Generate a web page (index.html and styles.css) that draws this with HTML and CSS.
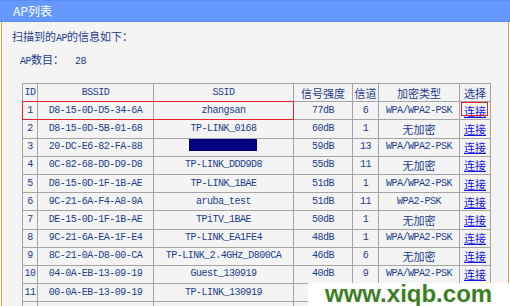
FILE: index.html
```html
<!DOCTYPE html>
<html lang="zh-CN">
<head>
<meta charset="utf-8">
<title>AP列表</title>
<link rel="stylesheet" href="styles.css">
</head>
<body>
<div class="titlebar">AP列表</div>
<div class="panel">
  <p class="info">扫描到的<span class="m">AP</span>的信息如下：</p>
  <p class="count"><span class="m">AP</span>数目：<span class="m num">28</span></p>
  <div class="tablewrap">
    <table class="aplist">
      <colgroup>
        <col class="c-id"><col class="c-bssid"><col class="c-ssid"><col class="c-sig"><col class="c-ch"><col class="c-enc"><col class="c-sel">
      </colgroup>
      <thead>
        <tr><th>ID</th><th>BSSID</th><th>SSID</th><th class="cn">信号强度</th><th class="cn">信道</th><th class="cn">加密类型</th><th class="cn">选择</th></tr>
      </thead>
      <tbody>
        <tr><td>1</td><td>D8-15-0D-D5-34-6A</td><td>zhangsan</td><td>77dB</td><td>6</td><td>WPA/WPA2-PSK</td><td class="cn"><a href="#">连接</a></td></tr>
        <tr><td>2</td><td>D8-15-0D-5B-01-68</td><td>TP-LINK_0168</td><td>60dB</td><td>1</td><td class="cn">无加密</td><td class="cn"><a href="#">连接</a></td></tr>
        <tr><td>3</td><td>20-DC-E6-82-FA-88</td><td><span class="redact"></span></td><td>59dB</td><td>13</td><td>WPA/WPA2-PSK</td><td class="cn"><a href="#">连接</a></td></tr>
        <tr><td>4</td><td>0C-82-68-DD-D9-D8</td><td>TP-LINK_DDD9D8</td><td>55dB</td><td>11</td><td class="cn">无加密</td><td class="cn"><a href="#">连接</a></td></tr>
        <tr><td>5</td><td>D8-15-0D-1F-1B-AE</td><td>TP-LINK_1BAE</td><td>51dB</td><td>1</td><td>WPA/WPA2-PSK</td><td class="cn"><a href="#">连接</a></td></tr>
        <tr><td>6</td><td>9C-21-6A-F4-A8-9A</td><td>aruba_test</td><td>51dB</td><td>11</td><td>WPA2-PSK</td><td class="cn"><a href="#">连接</a></td></tr>
        <tr><td>7</td><td>DE-15-0D-1F-1B-AE</td><td>TPiTV_1BAE</td><td>50dB</td><td>1</td><td class="cn">无加密</td><td class="cn"><a href="#">连接</a></td></tr>
        <tr><td>8</td><td>9C-21-6A-EA-1F-E4</td><td>TP-LINK_EA1FE4</td><td>48dB</td><td>1</td><td>WPA/WPA2-PSK</td><td class="cn"><a href="#">连接</a></td></tr>
        <tr><td>9</td><td>8C-21-0A-D8-00-CA</td><td>TP-LINK_2.4GHz_D800CA</td><td>46dB</td><td>6</td><td class="cn">无加密</td><td class="cn"><a href="#">连接</a></td></tr>
        <tr><td>10</td><td>04-0A-EB-13-09-19</td><td>Guest_130919</td><td>40dB</td><td>9</td><td>WPA/WPA2-PSK</td><td class="cn"><a href="#">连接</a></td></tr>
        <tr><td>11</td><td>00-0A-EB-13-09-19</td><td>TP-LINK_130919</td><td></td><td></td><td></td><td></td></tr>
        <tr><td></td><td></td><td></td><td></td><td></td><td></td><td></td></tr>
      </tbody>
    </table>
    <div class="mark mark-row"></div>
    <div class="mark mark-link"></div>
  </div>
</div>
<div class="watermark">www.xiqb.com</div>
</body>
</html>
```

FILE: styles.css
```css
html, body {
  margin: 0;
  padding: 0;
}

body {
  width: 510px;
  height: 306px;
  overflow: hidden;
  position: relative;
  background: #ffffff;
  font-family: "Noto Sans CJK SC", sans-serif;
}

.titlebar {
  height: 22px;
  box-sizing: border-box;
  border-top: 1px solid #5b8ef4;
  border-bottom: 1px solid #5b8ef4;
  background: #6699ff;
  color: #ffffff;
  font-size: 12px;
  line-height: 20px;
  padding-left: 13px;
}

.panel {
  margin: 0 1px;
  height: 284px;
  box-sizing: border-box;
  border-left: 1px solid #ff9a2e;
  border-right: 1px solid #ff9a2e;
  box-shadow: inset -1px 0 #ffffff;
  background: #f4f4f4;
  padding: 7px 0 0 10px;
  color: #1c3c8c;
  overflow: hidden;
}

.m {
  font-family: "Liberation Mono", monospace;
  font-size: 10px;
  letter-spacing: -0.5px;
}

.info {
  margin: 0;
  font-size: 11px;
  line-height: 14px;
}

.count {
  margin: 6px 0 0 8px;
  font-size: 11px;
  line-height: 14px;
}

.num {
  margin-left: 11px;
}

.tablewrap {
  position: relative;
  margin: 14px 0 0 10px;
  width: 468px;
}

.aplist {
  border-collapse: collapse;
  table-layout: fixed;
  width: 468px;
  color: #1c3c8c;
  font-family: "Liberation Mono", monospace;
  font-size: 10px;
  letter-spacing: -0.5px;
}

.aplist th,
.aplist td {
  border: 1px solid #a4a4a4;
  padding: 0;
  height: 17px;
  text-align: center;
  vertical-align: middle;
  font-weight: normal;
  white-space: nowrap;
  overflow: hidden;
  line-height: 12px;
}

.aplist tr {
  height: 18.2px;
}

.aplist .cn {
  font-family: "Noto Sans CJK SC", sans-serif;
  font-size: 11px;
  letter-spacing: 0;
}

.aplist a {
  color: #1414e6;
  text-decoration: underline;
}

.c-id { width: 15px; }
.c-bssid { width: 116px; }
.c-ssid { width: 140px; }
.c-sig { width: 59px; }
.c-ch { width: 26px; }
.c-enc { width: 81px; }
.c-sel { width: 31px; }

.redact {
  display: block;
  width: 68px;
  height: 12px;
  margin: 0 0 4px 35px;
  background: #000080;
}

.mark {
  position: absolute;
  box-sizing: border-box;
  border: 1px solid #e5232a;
}

.mark-row {
  left: 0;
  top: 18px;
  width: 272px;
  height: 19px;
}

.mark-link {
  left: 439px;
  top: 19px;
  width: 27px;
  height: 14px;
}

.watermark {
  position: absolute;
  right: 0;
  bottom: 0;
  width: 202px;
  height: 23px;
  box-sizing: border-box;
  padding-left: 17px;
  background: #ffffff;
  color: #3c7f23;
  font-family: "Liberation Sans", sans-serif;
  font-weight: bold;
  font-size: 24px;
  line-height: 21px;
}
```
